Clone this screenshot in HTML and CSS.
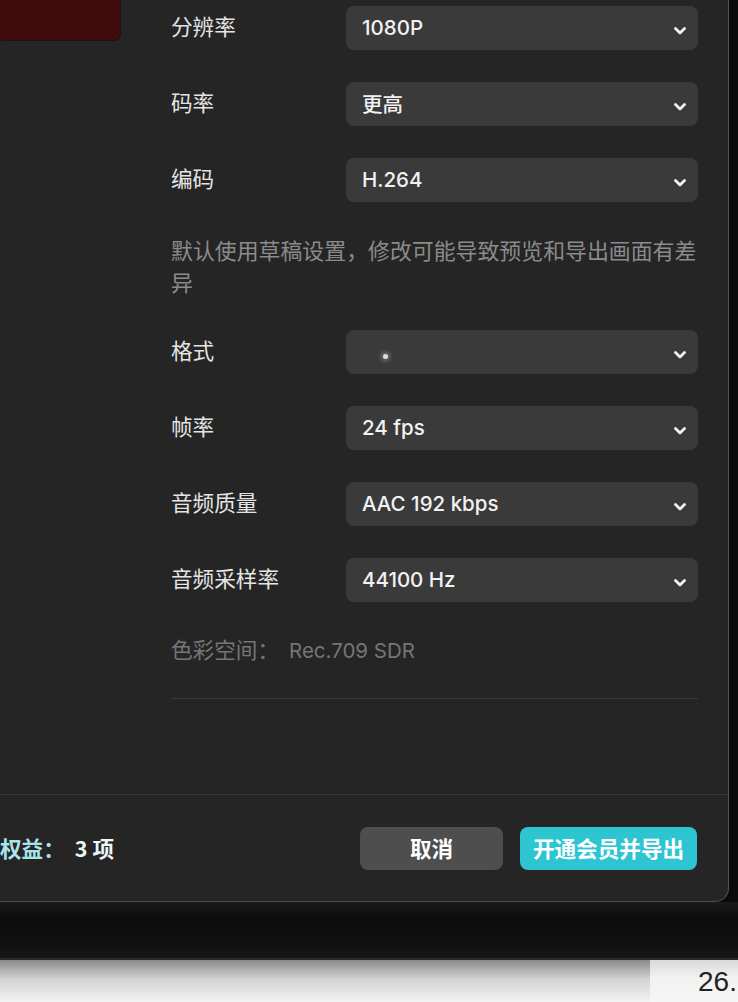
FILE: index.html
```html
<html>
  <head>
    <meta name="viewport" content="width=device-width, initial-scale=1">
    <link rel="stylesheet" href="styles.css">
  </head>
  <body>
    <div class="dialog">
      <div class="main">
        <div class="side">
          <div class="thumb"></div>
        </div>
        <div class="form">
          <div class="row">
            <span class="label">分辨率</span>
            <div class="select"><span>1080P</span><svg class="chev" viewBox="0 0 12 8"><polyline points="1.5,1.5 6,6 10.5,1.5"/></svg></div>
          </div>
          <div class="row">
            <span class="label">码率</span>
            <div class="select"><span>更高</span><svg class="chev" viewBox="0 0 12 8"><polyline points="1.5,1.5 6,6 10.5,1.5"/></svg></div>
          </div>
          <div class="row">
            <span class="label">编码</span>
            <div class="select"><span>H.264</span><svg class="chev" viewBox="0 0 12 8"><polyline points="1.5,1.5 6,6 10.5,1.5"/></svg></div>
          </div>
          <p class="note">默认使用草稿设置，修改可能导致预览和导出画面有差异</p>
          <div class="row">
            <span class="label">格式</span>
            <div class="select"><span class="blip"></span><svg class="chev" viewBox="0 0 12 8"><polyline points="1.5,1.5 6,6 10.5,1.5"/></svg></div>
          </div>
          <div class="row">
            <span class="label">帧率</span>
            <div class="select"><span>24 fps</span><svg class="chev" viewBox="0 0 12 8"><polyline points="1.5,1.5 6,6 10.5,1.5"/></svg></div>
          </div>
          <div class="row">
            <span class="label">音频质量</span>
            <div class="select"><span>AAC 192 kbps</span><svg class="chev" viewBox="0 0 12 8"><polyline points="1.5,1.5 6,6 10.5,1.5"/></svg></div>
          </div>
          <div class="row">
            <span class="label">音频采样率</span>
            <div class="select"><span>44100 Hz</span><svg class="chev" viewBox="0 0 12 8"><polyline points="1.5,1.5 6,6 10.5,1.5"/></svg></div>
          </div>
          <p class="color-space">色彩空间：<span class="cs-value">Rec.709 SDR</span></p>
          <div class="divider"></div>
        </div>
      </div>
      <div class="footer">
        <div class="perks"><span class="perks-key">权益：</span><span class="perks-val">3 项</span></div>
        <div class="actions">
          <button class="btn cancel">取消</button>
          <button class="btn primary">开通会员并导出</button>
        </div>
      </div>
    </div>
    <div class="desk"></div>
    <div class="taskbar">
      <div class="tb-left"></div>
      <div class="tb-right">26.</div>
    </div>
  </body>
</html>
```

FILE: styles.css
```css
body {
  margin: 0;
  background: #0b0b0b;
  font-family: "Noto Sans CJK SC", "Liberation Sans", sans-serif;
  width: 738px;
  height: 1002px;
  overflow: hidden;
}

.dialog {
  width: 729px;
  height: 902px;
  box-sizing: border-box;
  background: #252525;
  border-right: 1px solid #555;
  border-bottom: 1px solid #4a5254;
  border-bottom-right-radius: 14px;
  display: flex;
  flex-direction: column;
}

.main {
  flex: 1;
  display: flex;
  border-bottom: 1px solid #383838;
}

.side {
  width: 171px;
}

.thumb {
  width: 120px;
  height: 40px;
  background: #410a0a;
  border-bottom-right-radius: 7px;
  box-shadow: 1px 1px 0 #161616;
}

.form {
  width: 527px;
  padding-top: 6px;
  display: flex;
  flex-direction: column;
  gap: 32px;
}

.row {
  display: flex;
  align-items: center;
  height: 44px;
}

.label {
  width: 175px;
  font-size: 21.6px;
  line-height: 30px;
  padding-bottom: 5px;
  color: #e4e4e4;
}

.select {
  flex: 1;
  height: 44px;
  background: #3a3a3a;
  border-radius: 8px;
  display: flex;
  align-items: center;
  justify-content: space-between;
  padding: 0 12px 0 16px;
  color: #f2f2f2;
  font-family: "Inter", "Noto Sans CJK SC", sans-serif;
  font-size: 20.5px;
  font-weight: 500;
}

.select span {
  margin-bottom: 2px;
}

.chev {
  width: 12px;
  height: 8px;
  margin-top: 5px;
}

.chev polyline {
  fill: none;
  stroke: #f4f4f4;
  stroke-width: 2.8;
  stroke-linecap: round;
  stroke-linejoin: round;
}

.select .blip {
  width: 5px;
  height: 5px;
  margin: 8px 0 0 21px;
  border-radius: 50%;
  background: #ddd;
  box-shadow: 0 0 4px 2px rgba(200, 200, 200, 0.4);
}

.note {
  margin: 0;
  font-size: 21.9px;
  line-height: 32px;
  color: #8b8b8b;
}

.color-space {
  margin: 0;
  font-size: 21.6px;
  line-height: 30px;
  color: #757575;
}

.cs-value {
  font-family: "Inter", "Liberation Sans", sans-serif;
  font-size: 20.5px;
  margin-left: 10px;
}

.divider {
  height: 1px;
  background: #3a3a3a;
}

.footer {
  height: 106px;
  display: flex;
  align-items: center;
  justify-content: space-between;
  padding-right: 31px;
}

.perks {
  font-size: 21.6px;
  font-weight: 700;
  padding-bottom: 2px;
}

.perks-key {
  color: #a9e4ea;
}

.perks-val {
  color: #eef6f7;
  margin-left: 10px;
}

.actions {
  display: flex;
  gap: 17px;
}

.btn {
  height: 43px;
  border: none;
  border-radius: 8px;
  font-family: "Noto Sans CJK SC", sans-serif;
  font-size: 21.6px;
  font-weight: 700;
  color: #fff;
  padding: 0 0 2px;
}

.cancel {
  width: 143px;
  background: #4e4e4e;
}

.primary {
  width: 177px;
  background: #2ec5d3;
}

.desk {
  height: 56px;
  background: linear-gradient(#1a1a1a, #0c0c0c 30%, #101010 70%, #161616);
  border-bottom: 2px solid #2a2a2a;
}

.taskbar {
  height: 42px;
  display: flex;
}

.tb-left {
  flex: 1;
  background: linear-gradient(#8a8a8a, #d2d2d2 45%, #f3f3f3);
}

.tb-right {
  width: 88px;
  background: linear-gradient(#d8d8d8, #f1f1f1 40%, #f6f6f6);
  font-family: "Liberation Sans", sans-serif;
  font-size: 28px;
  color: #222;
  line-height: 44px;
  padding-left: 48px;
  box-sizing: border-box;
  white-space: nowrap;
  overflow: hidden;
}
```
